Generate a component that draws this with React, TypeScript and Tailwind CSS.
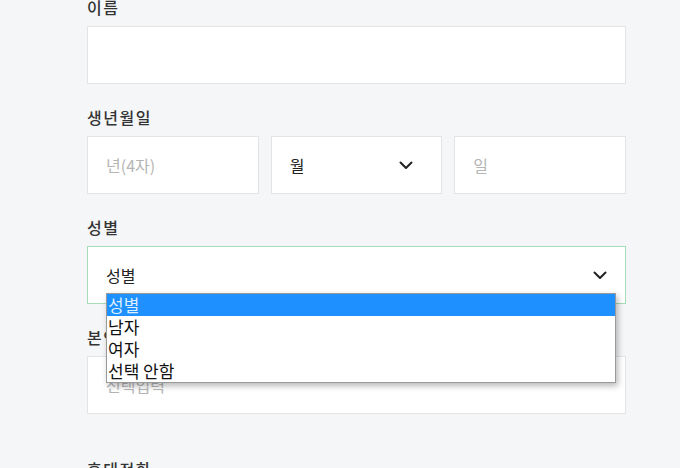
const font = { fontFamily: '"Noto Sans CJK KR", "Noto Sans", sans-serif' };

function Chevron() {
  return (
    <svg width="14" height="9" viewBox="0 0 14 9" fill="none" className="shrink-0">
      <path d="M1.5 1.5L7 7L12.5 1.5" stroke="#222" strokeWidth="2" strokeLinecap="round" strokeLinejoin="round" />
    </svg>
  );
}

function Label({ children, className = "" }: { children: React.ReactNode; className?: string }) {
  return (
    <div className={`text-[16px] font-medium leading-[22px] tracking-[1.5px] text-[#333] mb-2 ${className}`}>
      {children}
    </div>
  );
}

const base = "h-[58px] bg-white border px-[18px] flex items-center text-[16px]";
const box = `${base} border-[#e3e4e6]`;

export default function App() {
  const options = ["성별", "남자", "여자", "선택 안함"];

  return (
    <div className="h-[468px] overflow-hidden bg-[#f5f6f7]" style={font}>
      <div className="ml-[87px] w-[539px] -mt-[4px]">
        {/* 이름 */}
        <Label>이름</Label>
        <div className={box}></div>

        {/* 생년월일 */}
        <Label className="mt-[22px]">생년월일</Label>
        <div className="grid grid-cols-3 gap-3">
          <div className={`${box} text-[#b5b5b5]`}>년(4자)</div>
          <div className={`${box} justify-between pr-[28px] text-[#222]`}>
            <span>월</span>
            <Chevron />
          </div>
          <div className={`${box} text-[#b5b5b5]`}>일</div>
        </div>

        {/* 성별 */}
        <Label className="mt-[22px]">성별</Label>
        <div className="relative">
          <div className={`${base} border-[#a6dcb7] justify-between pr-[18px] text-[#222]`}>
            <span>성별</span>
            <Chevron />
          </div>
          {/* 열린 select 목록 */}
          <div className="absolute left-[19px] top-[47px] w-[510px] bg-white border border-[#9a9a9a] shadow-[2px_3px_6px_rgba(0,0,0,0.28)] z-10">
            {options.map((o, i) => (
              <div
                key={o}
                className={`h-[22px] leading-[22px] pl-px text-[17px] ${
                  i === 0 ? "bg-[#1e90ff] text-[#dceeff]" : "text-[#111]"
                }`}
              >
                {o}
              </div>
            ))}
          </div>
        </div>

        {/* 본인 확인 이메일 */}
        <Label className="mt-[22px]">본인 확인 이메일</Label>
        <div className={`${box} text-[#b5b5b5]`}>선택입력</div>

        {/* 휴대전화 */}
        <Label className="mt-[44px]">휴대전화</Label>
        <div className={box}></div>
      </div>
    </div>
  );
}
